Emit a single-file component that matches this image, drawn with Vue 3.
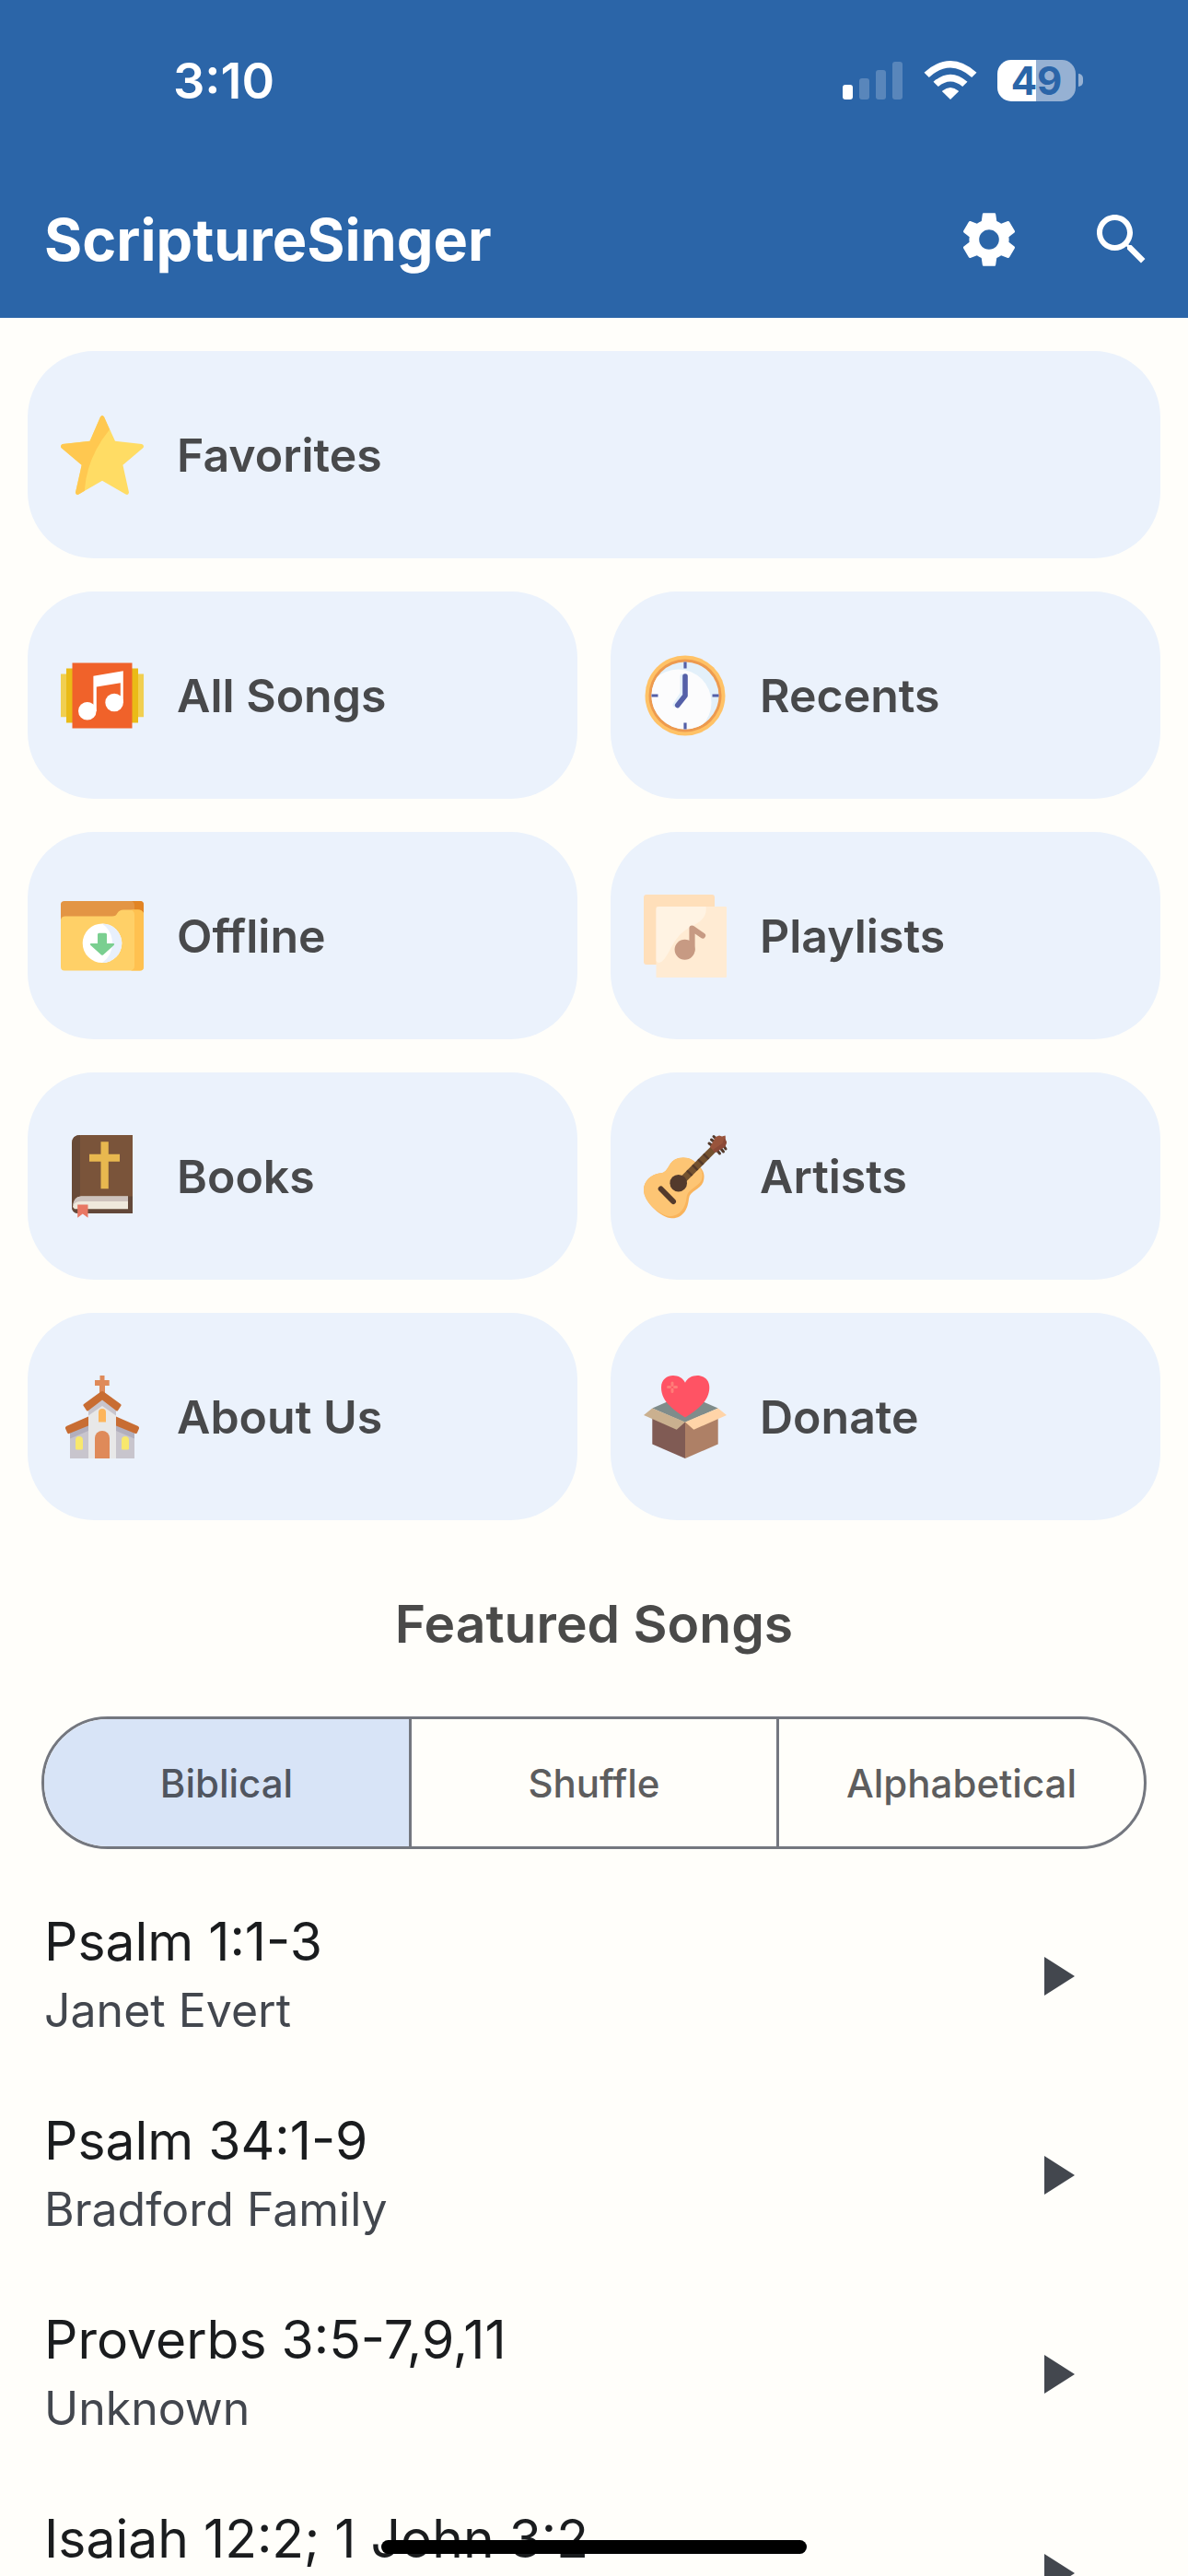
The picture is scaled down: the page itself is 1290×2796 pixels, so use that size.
<template>
  <div class="page">
    <header class="header">
      <div class="status">
        <span class="time">3:10</span>
        <div class="status-icons">
          <svg width="66" height="42" viewBox="0 0 66 42" aria-hidden="true">
            <rect x="0" y="26" width="11" height="16" rx="3" fill="#fff" />
            <rect x="18" y="19" width="11" height="23" rx="3" fill="#fff" opacity="0.22" />
            <rect x="36" y="10" width="11" height="32" rx="3" fill="#fff" opacity="0.22" />
            <rect x="54" y="1" width="11" height="41" rx="3" fill="#fff" opacity="0.22" />
          </svg>
          <svg width="58" height="42" viewBox="0 0 58 42" aria-hidden="true">
            <path d="M29 42 20.300 33.400Q20 33 20.400 32.600 29 25.500 37.600 32.600 38 33 37.700 33.400Z" fill="#fff" />
            <path d="M10.500 22.800Q29 6.500 47.500 22.800L42.200 28.100Q29 17 15.800 28.100Z" fill="#fff" />
            <path d="M.500 12.700Q29-12.700 57.500 12.700L52.200 18Q29-3 5.800 18Z" fill="#fff" />
          </svg>
          <div class="battery">
            <span class="battery-body" :style="{ '--level': battery + '%' }">{{ battery }}</span>
            <span class="battery-cap"></span>
          </div>
        </div>
      </div>
      <div class="toolbar">
        <h1>ScriptureSinger</h1>
        <div class="actions">
          <button class="icon-button" aria-label="Settings">
            <svg viewBox="0 0 24 24" fill="currentColor">
              <path d="M19.140 12.940c.040-.300.060-.610.060-.940 0-.320-.020-.640-.070-.940l2.030-1.580c.180-.140.230-.410.120-.610l-1.920-3.320c-.120-.220-.370-.290-.590-.220l-2.390.960c-.500-.380-1.030-.700-1.620-.940l-.360-2.540c-.040-.240-.240-.410-.480-.410h-3.840c-.240 0-.430.170-.470.410l-.360 2.540c-.590.240-1.130.570-1.620.940l-2.390-.960c-.220-.080-.470 0-.590.220L2.740 8.870c-.120.210-.080.470.120.610l2.030 1.580c-.050.300-.090.630-.090.940s.020.640.070.940l-2.030 1.580c-.180.140-.230.410-.120.610l1.920 3.320c.120.220.370.290.590.220l2.390-.960c.500.380 1.030.700 1.620.940l.360 2.540c.050.240.240.410.480.410h3.840c.240 0 .440-.170.470-.410l.360-2.540c.590-.240 1.130-.560 1.620-.940l2.390.960c.220.080.470 0 .590-.220l1.920-3.320c.120-.220.070-.470-.120-.610l-2.010-1.580zM12 15.600c-1.980 0-3.600-1.620-3.600-3.600s1.620-3.600 3.600-3.600 3.600 1.620 3.600 3.600-1.620 3.600-3.600 3.600z" />
            </svg>
          </button>
          <button class="icon-button" aria-label="Search">
            <svg viewBox="0 0 24 24" fill="currentColor">
              <path d="M15.500 14h-.790l-.280-.270C15.410 12.590 16 11.110 16 9.500 16 5.910 13.090 3 9.500 3S3 5.910 3 9.500 5.910 16 9.500 16c1.610 0 3.090-.590 4.230-1.570l.270.280v.790l5 4.990L20.490 19l-4.990-5zm-6 0C7.010 14 5 11.990 5 9.500S7.010 5 9.500 5 14 7.010 14 9.500 11.990 14 9.500 14z" />
            </svg>
          </button>
        </div>
      </div>
    </header>

    <main class="content">
      <nav class="grid">
        <button
          v-for="item in menu"
          :key="item.id"
          class="card"
          :class="{ wide: item.wide }"
        >
          <svg v-if="item.id === 'favorites'" class="card-icon" viewBox="0 0 90 90">
            <path d="M43 3.500Q45 .500 47 3.500L59 29.800 88 33Q91 34.500 89.500 37L67.400 55.800 74 85.500Q73.500 89 70.500 87.500L45 72.800 19.500 87.500Q16.500 89 16 85.500L22.700 55.800.500 37Q-1 34.500 2 33L31.600 29.800Z" fill="#ffdc64" />
            <path d="M43 3.500Q45 .500 47 3.500L53 17.200Q28 48 25.800 83.700L19.500 87.500Q16.500 89 16 85.500L22.700 55.800.500 37Q-1 34.500 2 33L31.600 29.800Z" fill="#ffc850" />
          </svg>
          <svg v-else-if="item.id === 'songs'" class="card-icon" viewBox="0 0 90 90">
            <path d="M0 21.500h90v46.700H0z" fill="#f1cf50" />
            <path d="M6 15.500h78v59H6z" fill="#eabb17" />
            <path d="M12.500 9.500h65v71h-65z" fill="#f0622a" />
            <path d="M35.400 23.800 67.800 18.200V53H64.800V31.200L38.800 35.500V62H35.400Z" fill="#fff" />
            <circle cx="28.800" cy="61.800" r="9.800" fill="#fff" />
            <circle cx="58.100" cy="52.500" r="9.800" fill="#fff" />
          </svg>
          <svg v-else-if="item.id === 'recents'" class="card-icon" viewBox="0 0 90 90">
            <defs>
              <clipPath id="clock-face"><circle cx="45" cy="45" r="36.500" /></clipPath>
            </defs>
            <circle cx="45" cy="45" r="43.500" fill="#ffc266" />
            <circle cx="45" cy="45" r="39.500" fill="#ed9a4f" />
            <circle cx="45" cy="45" r="36.500" fill="#e3f0fa" />
            <circle cx="37.500" cy="52.500" r="36" fill="#fcfcfd" clip-path="url(#clock-face)" />
            <path d="M42 24V43L34 55" fill="none" stroke="#e3f0fa" stroke-width="5" stroke-linecap="round" />
            <path d="M45 8.500v7M45 74.500v7M8.500 45h7M74.500 45h7" stroke="#5460a8" stroke-width="3.200" />
            <path d="M45 24V45L36.700 55.500" fill="none" stroke="#5460a8" stroke-width="5.600" stroke-linecap="round" stroke-linejoin="round" />
          </svg>
          <svg v-else-if="item.id === 'offline'" class="card-icon" viewBox="0 0 90 90">
            <path d="M0 30V10.500Q0 7 4 7H86Q90 7 90 11V30Z" fill="#e39544" />
            <path d="M77 7H86Q90 7 90 11V25H80V12Q80 8 77 7Z" fill="#e28424" />
            <path d="M0 27.500Q.500 23.500 5 23.500H56Q60 23.500 61.500 20 63.500 16.500 68 16.500H84Q89 16.500 90 21V78.500Q90 82.500 86 82.500H4Q0 82.500 0 78.500Z" fill="#ffd067" />
            <path d="M76 16.500H84Q89 16.500 90 21V78.500Q90 82.500 86 82.500H76Q80 81.500 80 77.500V22Q80 17.500 76 16.500Z" fill="#ffc150" />
            <circle cx="45" cy="52.800" r="21.300" fill="#fff" />
            <path d="M45 31.500A21.300 21.300 0 0 1 45 74.100Q56 66 56 52.800T45 31.500Z" fill="#e8f0fc" />
            <path d="M41.500 41.700H48.500Q50 41.700 50 43.200V53H57Q59 53.200 57.600 55L46 65.500Q45 66.200 44 65.500L32.400 55Q31 53.200 33 53H40V43.200Q40 41.700 41.500 41.700Z" fill="#7acf90" />
          </svg>
          <svg v-else-if="item.id === 'playlists'" class="card-icon" viewBox="0 0 90 90">
            <rect x="0" y="0" width="77" height="76" rx="3" fill="#ffdfba" />
            <rect x="13.500" y="13" width="76.500" height="77" rx="1" fill="#ffebd3" />
            <path d="M13.500 16Q13.500 13 17 13H67.500C69 22 64 28 55 33 34 42 31 58 23 69Q17 77 13.500 72Z" fill="#fff3e3" />
            <circle cx="44.600" cy="59.800" r="11" fill="#c79a83" />
            <path d="M52.500 60V36.500L64 44.500" fill="none" stroke="#c79a83" stroke-width="6.200" stroke-linecap="round" stroke-linejoin="round" />
          </svg>
          <svg v-else-if="item.id === 'books'" class="card-icon" viewBox="0 0 90 90">
            <path d="M12 9Q12 0 22 0H78V85H19Q12 85 12 77Z" fill="#7a543a" />
            <path d="M12 9Q12 0 21 0V66Q12 68 12 77Z" fill="#684a37" />
            <path d="M12 77Q13 66.500 22 66.500H78V85H19Q12 85 12 77Z" fill="#634839" />
            <path d="M13 78Q14 66.500 22 66.500H73V80.200H15Z" fill="#efe9dc" />
            <path d="M13 77Q14 66.500 22 66.500H73V72H22Q15 72 13 77Z" fill="#cec3bd" />
            <path d="M43.500 7.200H51.800V20.800H64V28.800H51.800V58.200H43.500V28.800H31V20.800H43.500Z" fill="#e8b84f" />
            <path d="M18.200 75.500H29.500V89.800L23.800 85.500 18.200 89.800Z" fill="#e87763" />
          </svg>
          <svg v-else-if="item.id === 'artists'" class="card-icon" viewBox="0 0 90 90">
            <path d="M43 24.500C50 24.500 56 28 58.500 32.500 65 37 67 44 64.500 51 61 60 50 60 49 69 48 80 43 90 31 90.300 20 91 0 73 0 59.500 0 50 8 42.500 17 41.500 30 41 24 25 43 24.500Z" fill="#f9b45c" />
            <path d="M43 24.500C50 24.500 55 28 57.500 32.500 63.500 37 65 43 62.500 49.500 58 57 47 59 46.500 68 45.500 79 39 88 28 88.300 15 86 0 72 0 59.500 0 50 8 42.500 17 41.500 30 41 24 25 43 24.500Z" fill="#fdc574" />
            <path d="M38 53 76 15" stroke="#73512f" stroke-width="8" />
            <path d="m47 38.500 5.500 5.500M53 32.500l5.500 5.500M59 26.500l5.500 5.500M65 20.500l5.500 5.500" stroke="#53392a" stroke-width="2.400" />
            <circle cx="37.700" cy="52.200" r="9.300" fill="#533a2c" />
            <path d="M18.700 58.500 32 72" stroke="#533a2c" stroke-width="6" stroke-linecap="round" />
            <path d="m71 9 4 3M73.500 5l4 3M76 1.500l3 3M80 17l2.500 3M84 15l2.500 3M87 12l2 3" stroke="#533a2c" stroke-width="3" stroke-linecap="round" />
            <path d="M72 13 78 2 82 .500 85 1.500 88.500.500 88.500 4 90 8 88.500 12.500 77.500 19Z" fill="#99543c" />
            <path d="M88.500.500 88.500 4 90 8 88.500 12.500 77.500 19 75 16 85.500 9Z" fill="#8b4937" />
          </svg>
          <svg v-else-if="item.id === 'about'" class="card-icon" viewBox="0 0 90 90">
            <path d="M10 58 30 50H60L80 58V90H10Z" fill="#c8c5cd" />
            <path d="M10 60 30 52V60L10 68.500ZM80 60 60 52V60L80 68.500Z" fill="#b2afbd" />
            <path d="M30 32 45 22 60 32V90H30Z" fill="#e8e8e8" />
            <path d="M30 34 45 24 60 34V43.500L45 33 30 43.500Z" fill="#c8c5cd" />
            <path d="M30 44.500V54.500L9 63Q7.500 63.500 7 62L5 57.500Q4.500 56 6 55ZM60 44.500V54.500L81 63Q82.500 63.500 83 62L85 57.500Q85.500 56 84 55Z" fill="#c86d33" />
            <path d="M42.500 0H47.500V5H52.700V11H48V20H42V11H37V5H42.500Z" fill="#df8a59" />
            <path d="M43.500 17.500Q45 16.500 46.500 17.500L65 31Q66 32 65.300 33L62 38Q61 39 60 38L45 26.500 30 38Q29 39 28 38L24.700 33Q24 32 25 31Z" fill="#c86d33" />
            <path d="M41 40a4 4 0 0 1 8 0V50.500H41Z" fill="#fdb55b" />
            <path d="M37 68a8 8 0 0 1 16 0V90H37Z" fill="#df8a59" />
            <path d="M16 70a4 4 0 0 1 8 0V79Q24 80.500 22.500 80.500H17.500Q16 80.500 16 79ZM66 70a4 4 0 0 1 8 0V79Q74 80.500 72.500 80.500H67.500Q66 80.500 66 79Z" fill="#f8e86d" />
          </svg>
          <svg v-else class="card-icon" viewBox="0 0 90 90">
            <path d="M9.300 43 45 50.500V90L9.300 74.500Z" fill="#805b54" />
            <path d="M80.700 43 45 50.500V90L80.700 74.500Z" fill="#ae8066" />
            <path d="M9.300 35.500 45 20 80.700 35.500 45 51Z" fill="#7f8c8b" />
            <path d="M0 43 9.300 35.500 45 50.500 35.700 58.800Z" fill="#cab08f" />
            <path d="M90 43 80.700 35.500 45 50.500 54.300 58.800Z" fill="#ffd4a8" />
            <path d="M45 7.800C40-3.500 19-3 19 13 19 28 32 37 45 45.500 58 37 71.300 28 71.300 13 71.300-3 50-3.500 45 7.800Z" fill="#ff5364" />
            <path d="M31 8v2.500M31 15v2.500M26.500 12.600h2M33.500 12.600h2" stroke="#ff7d78" stroke-width="3" stroke-linecap="round" />
          </svg>
          <span>{{ item.label }}</span>
        </button>
      </nav>

      <h2>Featured Songs</h2>

      <div class="segments" role="radiogroup" aria-label="Song order">
        <label
          v-for="option in orders"
          :key="option"
          class="segment"
          :class="{ active: order === option }"
        >
          <input v-model="order" type="radio" name="order" :value="option" />
          {{ option }}
        </label>
      </div>

      <ul class="songs">
        <li v-for="song in songs" :key="song.title" class="song">
          <div>
            <h3>{{ song.title }}</h3>
            <p>{{ song.artist }}</p>
          </div>
          <button class="play" :aria-label="'Play ' + song.title">
            <svg viewBox="0 0 24 24" fill="currentColor"><path d="M8 5v14l11-7z" /></svg>
          </button>
        </li>
      </ul>
    </main>

    <div class="home-bar"></div>
  </div>
</template>

<script setup>
import { ref } from 'vue'

const battery = ref(49)

const menu = [
  { id: 'favorites', label: 'Favorites', wide: true },
  { id: 'songs', label: 'All Songs' },
  { id: 'recents', label: 'Recents' },
  { id: 'offline', label: 'Offline' },
  { id: 'playlists', label: 'Playlists' },
  { id: 'books', label: 'Books' },
  { id: 'artists', label: 'Artists' },
  { id: 'about', label: 'About Us' },
  { id: 'donate', label: 'Donate' }
]

const orders = ['Biblical', 'Shuffle', 'Alphabetical']
const order = ref('Biblical')

const songs = [
  { title: 'Psalm 1:1-3', artist: 'Janet Evert' },
  { title: 'Psalm 34:1-9', artist: 'Bradford Family' },
  { title: 'Proverbs 3:5-7,9,11', artist: 'Unknown' },
  { title: 'Isaiah 12:2; 1 John 3:2', artist: '' }
]
</script>

<style>
body {
  background: #fffefa;
}
</style>

<style scoped>
.page {
  height: 100vh;
  display: flex;
  flex-direction: column;
  overflow: hidden;
  font-family: Inter, "Open Sans", sans-serif;
  color: #48494b;
}

h1,
h2,
h3,
p {
  margin: 0;
}

button {
  border: none;
  padding: 0;
  background: transparent;
  color: inherit;
  font-family: inherit;
  cursor: pointer;
}

.header {
  flex: none;
  background: #2b65a8;
  color: #ffffff;
}

.status {
  display: flex;
  align-items: center;
  justify-content: space-between;
  height: 174px;
  padding: 0 114px 0 188px;
}

.time {
  font-size: 54px;
  font-weight: 600;
}

.status-icons {
  display: flex;
  align-items: center;
  gap: 22px;
}

.battery {
  display: flex;
  align-items: center;
  gap: 3px;
}

.battery-body {
  width: 85px;
  height: 45px;
  border-radius: 15px;
  background: linear-gradient(to right, #ffffff var(--level), #96b1d3 var(--level));
  color: #2b65a8;
  font-size: 42px;
  font-weight: 700;
  line-height: 45px;
  text-align: center;
}

.battery-cap {
  width: 5px;
  height: 14px;
  border-radius: 0 7px 7px 0;
  background: #96b1d3;
}

.toolbar {
  display: flex;
  align-items: center;
  justify-content: space-between;
  height: 171px;
  padding: 0 36px 0 48px;
}

h1 {
  font-size: 63px;
  font-weight: 700;
}

.actions {
  display: flex;
  gap: 72px;
}

.icon-button {
  width: 72px;
  height: 72px;
}

.icon-button svg,
.play svg {
  display: block;
  width: 100%;
  height: 100%;
}

.content {
  flex: 1;
  min-height: 0;
  overflow-y: auto;
  scrollbar-width: none;
}

.grid {
  display: grid;
  grid-template-columns: 1fr 1fr;
  gap: 36px;
  padding: 36px 30px 0;
}

.card {
  display: flex;
  align-items: center;
  gap: 36px;
  height: 225px;
  padding: 0 36px;
  border-radius: 72px;
  background: #ebf2fc;
  font-size: 50px;
  font-weight: 600;
}

.wide {
  grid-column: span 2;
}

.card-icon {
  width: 90px;
  height: 90px;
  overflow: visible;
}

h2 {
  margin: 72px 0 60px;
  font-size: 57px;
  font-weight: 600;
  line-height: 81px;
  text-align: center;
  color: #4a4a49;
}

.segments {
  display: flex;
  height: 144px;
  margin: 0 45px;
  box-sizing: border-box;
  border: 3px solid #74777f;
  border-radius: 72px;
  overflow: hidden;
}

.segment {
  flex: 1;
  display: flex;
  align-items: center;
  justify-content: center;
  font-size: 42px;
  font-weight: 500;
  color: #5d5d5e;
  cursor: pointer;
}

.segment + .segment {
  border-left: 3px solid #74777f;
}

.segment.active {
  background: #d8e4f7;
  color: #50555f;
}

.segment input {
  appearance: none;
  width: 0;
  margin: 0;
}

.songs {
  margin: 0;
  padding: 30px 0 0;
  list-style: none;
}

.song {
  display: flex;
  align-items: center;
  justify-content: space-between;
  height: 216px;
  padding: 0 108px 0 48px;
}

h3 {
  font-size: 57px;
  font-weight: 400;
  line-height: 75px;
  color: #1a1c1e;
}

.song p {
  min-height: 75px;
  font-size: 50px;
  line-height: 75px;
  color: #43474e;
}

.play {
  width: 72px;
  height: 72px;
  color: #43474e;
}

.home-bar {
  position: fixed;
  bottom: 24px;
  left: 50%;
  width: 462px;
  height: 15px;
  margin-left: -231px;
  border-radius: 8px;
  background: #000000;
}
</style>
